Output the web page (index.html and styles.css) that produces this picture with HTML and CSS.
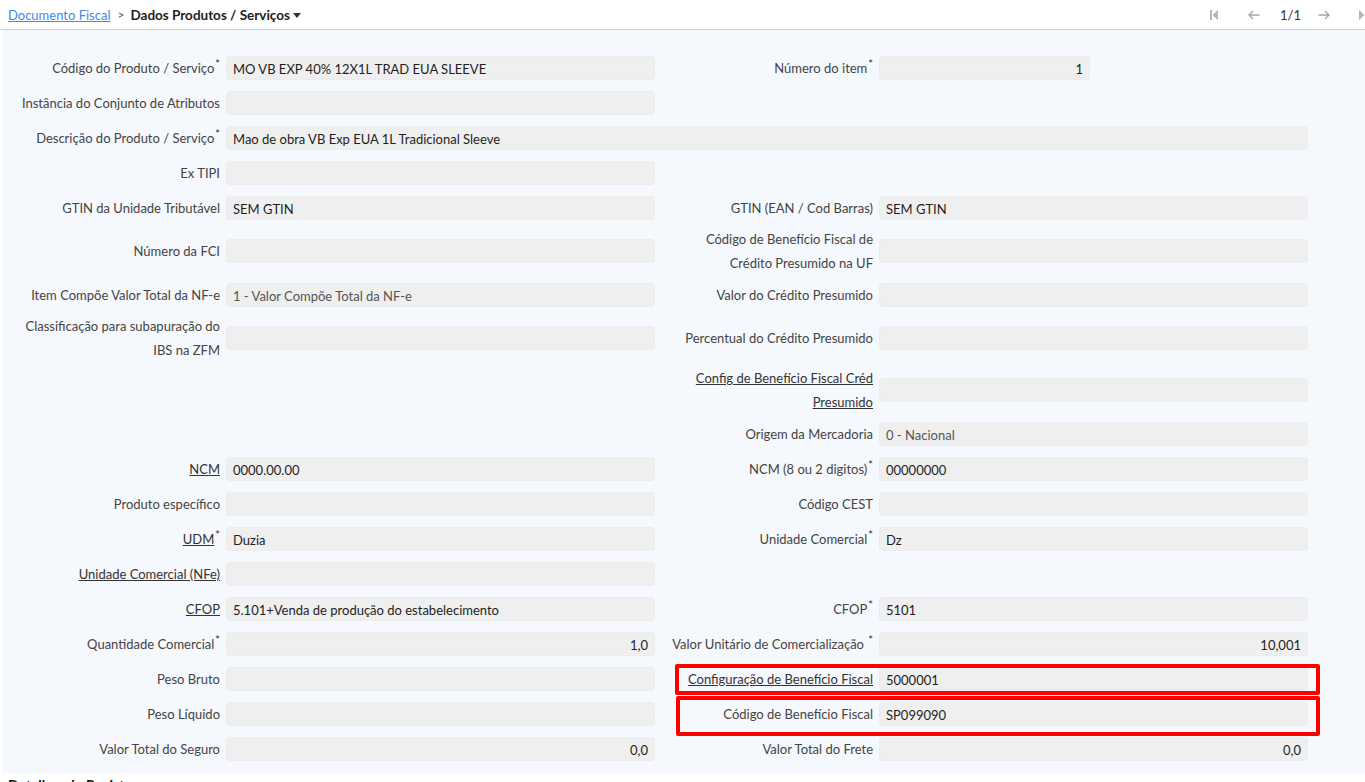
FILE: index.html
```html
<!DOCTYPE html>
<html lang="pt-BR">
<head>
<meta charset="utf-8">
<title>Dados Produtos / Serviços</title>
<link rel="stylesheet" href="styles.css">
</head>
<body>
<header class="control-panel">
  <nav class="breadcrumb">
    <a class="crumb-link" href="#">Documento Fiscal</a>
    <span class="crumb-sep">&gt;</span>
    <span class="crumb-current">Dados Produtos / Serviços</span>
    <svg class="caret" width="8" height="5" viewBox="0 0 8 5"><path d="M0 0H8L4 5Z"/></svg>
  </nav>
  <div class="pager">
    <svg class="pg-icon pg-first" width="8" height="10" viewBox="0 0 8 10"><rect x="0" y="0" width="2" height="10"/><path d="M8 0V10L2.5 5Z"/></svg>
    <svg class="pg-arrow pg-prev" width="12" height="10" viewBox="0 0 12 10"><path d="M11.5 5H1M5 1L1 5L5 9"/></svg>
    <span class="pg-value">1/1</span>
    <svg class="pg-arrow pg-next" width="12" height="10" viewBox="0 0 12 10"><path d="M0.5 5H11M7 1L11 5L7 9"/></svg>
    <svg class="pg-icon pg-last" width="8" height="10" viewBox="0 0 8 10"><path d="M0 0V10L5.5 5Z"/><rect x="6" y="0" width="2" height="10"/></svg>
  </div>
</header>

<main class="sheet">
  <div class="form-grid">
    <label class="lbl">Código do Produto / Serviço<sup>*</sup></label>
    <div class="fld">MO VB EXP 40% 12X1L TRAD EUA SLEEVE</div>
    <label class="lbl">Número do item<sup>*</sup></label>
    <div class="fld num short">1</div>

    <label class="lbl">Instância do Conjunto de Atributos</label>
    <div class="fld"></div>
    <div class="blank"></div>
    <div class="blank"></div>

    <label class="lbl">Descrição do Produto / Serviço<sup>*</sup></label>
    <div class="fld wide">Mao de obra VB Exp EUA 1L Tradicional Sleeve</div>

    <label class="lbl">Ex TIPI</label>
    <div class="fld"></div>
    <div class="blank"></div>
    <div class="blank"></div>

    <label class="lbl">GTIN da Unidade Tributável</label>
    <div class="fld">SEM GTIN</div>
    <label class="lbl">GTIN (EAN / Cod Barras)</label>
    <div class="fld">SEM GTIN</div>

    <label class="lbl">Número da FCI</label>
    <div class="fld"></div>
    <label class="lbl">Código de Benefício Fiscal de Crédito Presumido na UF</label>
    <div class="fld"></div>

    <label class="lbl">Item Compõe Valor Total da NF-e</label>
    <div class="fld muted">1 - Valor Compõe Total da NF-e</div>
    <label class="lbl">Valor do Crédito Presumido</label>
    <div class="fld"></div>

    <label class="lbl">Classificação para subapuração do IBS na ZFM</label>
    <div class="fld"></div>
    <label class="lbl">Percentual do Crédito Presumido</label>
    <div class="fld"></div>

    <div class="blank"></div>
    <div class="blank"></div>
    <label class="lbl"><a class="lbl-link narrow" href="#">Config de Benefício Fiscal Créd Presumido</a></label>
    <div class="fld"></div>

    <div class="blank"></div>
    <div class="blank"></div>
    <label class="lbl">Origem da Mercadoria</label>
    <div class="fld muted">0 - Nacional</div>

    <label class="lbl"><a class="lbl-link" href="#">NCM</a></label>
    <div class="fld">0000.00.00</div>
    <label class="lbl">NCM (8 ou 2 digitos)<sup>*</sup></label>
    <div class="fld">00000000</div>

    <label class="lbl">Produto específico</label>
    <div class="fld"></div>
    <label class="lbl">Código CEST</label>
    <div class="fld"></div>

    <label class="lbl"><a class="lbl-link" href="#">UDM</a><sup>*</sup></label>
    <div class="fld">Duzia</div>
    <label class="lbl">Unidade Comercial<sup>*</sup></label>
    <div class="fld">Dz</div>

    <label class="lbl"><a class="lbl-link" href="#">Unidade Comercial (NFe)</a></label>
    <div class="fld"></div>
    <div class="blank"></div>
    <div class="blank"></div>

    <label class="lbl"><a class="lbl-link" href="#">CFOP</a></label>
    <div class="fld">5.101+Venda de produção do estabelecimento</div>
    <label class="lbl">CFOP<sup>*</sup></label>
    <div class="fld">5101</div>

    <label class="lbl">Quantidade Comercial<sup>*</sup></label>
    <div class="fld num">1,0</div>
    <label class="lbl">Valor Unitário de Comercialização <sup>*</sup></label>
    <div class="fld num">10,001</div>

    <label class="lbl">Peso Bruto</label>
    <div class="fld"></div>
    <label class="lbl"><a class="lbl-link" href="#">Configuração de Benefício Fiscal</a></label>
    <div class="fld">5000001</div>

    <label class="lbl">Peso Líquido</label>
    <div class="fld"></div>
    <label class="lbl">Código de Benefício Fiscal</label>
    <div class="fld">SP099090</div>

    <label class="lbl">Valor Total do Seguro</label>
    <div class="fld num">0,0</div>
    <label class="lbl">Valor Total do Frete</label>
    <div class="fld num">0,0</div>
  </div>

  <div class="highlight hl-config"></div>
  <div class="highlight hl-codigo"></div>
</main>

<h3 class="section-title">Detalhes do Registro</h3>
</body>
</html>
```

FILE: styles.css
```css
html, body {
  margin: 0;
  padding: 0;
  background: #ffffff;
  font-family: "Lato", "Liberation Sans", sans-serif;
  font-size: 13px;
  color: #222;
}

/* ---------- control panel ---------- */
.control-panel {
  height: 29px;
  border-bottom: 1px solid #cfcfcf;
  display: flex;
  align-items: center;
  justify-content: space-between;
  background: #fff;
}

.breadcrumb {
  display: flex;
  align-items: center;
  padding-left: 8px;
  font-size: 13px;
}

.crumb-link {
  color: #3b8beb;
  text-decoration: underline;
}

.crumb-sep {
  color: #555;
  font-size: 12px;
  margin: 0 6px 0 7px;
}

.crumb-current {
  font-weight: 700;
  font-size: 13.5px;
  color: #222;
}

.caret {
  fill: #333;
  margin-left: 3px;
  margin-top: 1px;
}

.pager {
  display: flex;
  align-items: center;
  margin-right: -2px;
}

.pg-icon { fill: #b5b5b5; }

.pg-arrow {
  fill: none;
  stroke: #a8a8a8;
  stroke-width: 1.4;
}

.pg-prev { margin-left: 30px; }

.pg-value {
  margin-left: 20px;
  font-size: 13px;
  color: #333;
}

.pg-next { margin-left: 17px; }
.pg-last { margin-left: 29px; }

/* ---------- form sheet ---------- */
.sheet {
  position: relative;
  margin-left: 3px;
  background: #f5f8fc;
  padding: 20px 0 7px 11px;
}

.form-grid {
  display: grid;
  grid-template-columns: 206px 429px 212px 429px;
  column-gap: 6px;
  grid-auto-rows: minmax(35px, auto);
  align-items: center;
}

.lbl {
  display: block;
  text-align: right;
  color: #444;
  line-height: 24px;
  padding: 2px 0;
}

.lbl sup {
  font-size: 11px;
  line-height: 0;
  vertical-align: 5px;
  margin-left: 1px;
  color: #333;
}

.lbl-link {
  color: #333;
  text-decoration: underline;
}

.lbl-link.narrow {
  display: inline-block;
  max-width: 185px;
}

.fld {
  height: 24px;
  box-sizing: border-box;
  line-height: 23px;
  padding: 1px 6px 0;
  background: #efefef;
  border: 1px solid #ececec;
  border-radius: 4px;
  color: #1e1e1e;
  white-space: nowrap;
  overflow: hidden;
}

.fld.muted { color: #555; }

.fld.num { text-align: right; }

.fld.short { width: 211px; }

.fld.wide { grid-column: 2 / 5; }

.blank { height: 24px; }

/* ---------- annotation highlights ---------- */
.highlight {
  position: absolute;
  border: 4px solid #ff0000;
  border-radius: 2px;
  box-sizing: border-box;
  pointer-events: none;
}

.hl-config {
  left: 672px;
  top: 634px;
  width: 645px;
  height: 31px;
}

.hl-codigo {
  left: 673px;
  top: 666px;
  width: 644px;
  height: 40px;
}

.section-title {
  margin: 3px 0 0 8px;
  font-size: 14px;
  font-weight: 700;
  color: #111;
}
```
